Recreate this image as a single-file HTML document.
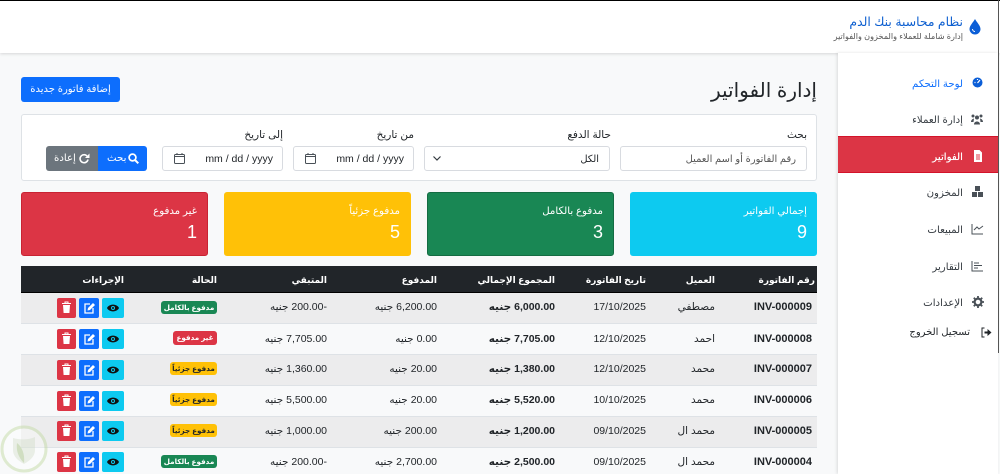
<!DOCTYPE html>
<html lang="ar" dir="rtl">
<head>
<meta charset="utf-8">
<style>
*{box-sizing:border-box;margin:0;padding:0}
html,body{width:1000px;height:474px;overflow:hidden}
body{position:relative;background:#f8f9fa;font-family:"Liberation Sans","DejaVu Sans",sans-serif;color:#212529;font-size:11px}
.a{position:absolute;white-space:nowrap}
.r{position:absolute;white-space:nowrap;text-align:right;direction:rtl}
#top{left:0;top:0;width:1000px;height:53px;background:#fff;border-top:1px solid #000;box-shadow:0 1px 3px rgba(0,0,0,.14)}
#side{left:838px;top:53px;width:160px;height:421px;background:#fff;box-shadow:-1px 0 3px rgba(0,0,0,.12)}
#edge{left:998px;top:0;width:1px;height:353px;background:#555}
#act{left:838px;top:136px;width:160px;height:37px;background:#dc3545;border-top:1px solid #d3132a;border-bottom:1px solid #d3132a}
.nav{font-size:10.2px;color:#343a40;line-height:14px}
.ic{position:absolute}
#filter{left:21px;top:114px;width:796px;height:67px;background:#fff;border:1px solid #dee2e6;border-radius:3px}
.lab{font-size:10.5px;color:#212529;line-height:14px}
.inp{position:absolute;height:25px;background:#fff;border:1px solid #d8dbe0;border-radius:3px;top:146px;font-size:9.9px;line-height:25px}
.date{font-size:10.5px;direction:ltr;text-align:right;padding-right:9px}
.card{position:absolute;top:192px;height:64px;width:187px;border-radius:3px;color:#fff}
.card .t{position:absolute;right:11px;top:13px;font-size:10.2px;line-height:14px;white-space:nowrap}
.card .n{position:absolute;right:11px;top:29px;font-size:18px;line-height:22px}
.hd{left:21px;top:266px;width:796px;height:27px;background:#212529;border-bottom:1px solid #000}
.th{position:absolute;top:273px;color:#fff;font-weight:bold;font-size:9px;line-height:14px;white-space:nowrap;text-align:right;direction:rtl}
.row{position:absolute;left:21px;width:796px;height:31px;border-bottom:1px solid #dee2e6}
.td{position:absolute;font-size:10.5px;line-height:14px;white-space:nowrap;text-align:right;color:#212529}
.inv{font-size:11px;font-weight:bold;direction:ltr}
.bg{position:absolute;height:13px;border-radius:3px;font-size:7.2px;font-weight:bold;line-height:13px;text-align:center;white-space:nowrap}
.gbtn{position:absolute;top:146px;height:25px;color:#fff;font-size:10.2px;line-height:25px;text-align:left}
</style>
</head>
<body>
<div class="a" id="top"></div>
<div class="a" id="side"></div>
<div class="a" id="act"></div>
<div class="a" id="edge"></div>

<svg class="ic" style="left:968px;top:18px" width="14" height="17" viewBox="0 0 14 17"><path d="M7 1C5.500 4 1.500 7.500 1.500 11a5.500 5.500 0 0 0 11 0C12.500 7.500 8.500 4 7 1z" fill="#0b5ed7"/><path d="M4.500 11a2.500 2.500 0 0 0 2.500 2.500" stroke="#fff" fill="none"/></svg>
<div class="r" style="right:37px;top:13px;font-size:12.4px;line-height:18px;color:#0d5fd0">نظام محاسبة بنك الدم</div>
<div class="r" style="right:37px;top:31px;font-size:8.1px;line-height:12px;color:#555">إدارة شاملة للعملاء والمخزون والفواتير</div>

<svg class="ic" style="left:972px;top:77px" width="11" height="11" viewBox="0 0 11 11"><circle cx="5.500" cy="5.500" r="5" fill="#0b5ed7"/><path d="M5.500 6L8 3M2.500 5.500h1M5.500 2v1" stroke="#fff" stroke-width="1.200"/></svg>
<div class="r nav" style="right:37px;top:78px;color:#0d6efd">لوحة التحكم</div>
<svg class="ic" style="left:970px;top:113px" width="14" height="12" viewBox="0 0 14 12"><g fill="#495057"><circle cx="3" cy="3" r="1.500"/><circle cx="11" cy="3" r="1.500"/><circle cx="7" cy="4.500" r="2"/><path d="M1 9c0-3 3-3.500 3-3.500L3.500 9zM13 9c0-3-3-3.500-3-3.500L10.500 9zM4 11.500c0-4 6-4 6 0z"/></g></svg>
<div class="r nav" style="right:37px;top:114px">إدارة العملاء</div>
<svg class="ic" style="left:973px;top:150px" width="10" height="12" viewBox="0 0 10 12"><path d="M1 0h5.500L9 2.500V12H1z" fill="#fff"/><path d="M3 5h4M3 7h4M3 9h4" stroke="#dc3545"/></svg>
<div class="r nav" style="right:37px;top:151px;color:#fff;text-shadow:0 0 .4px #fff">الفواتير</div>
<svg class="ic" style="left:971px;top:186px" width="13" height="12" viewBox="0 0 13 12"><g fill="#495057"><rect x="1" y="6" width="5" height="5"/><rect x="7" y="6" width="5" height="5"/><rect x="4" y="0" width="5" height="5"/></g></svg>
<div class="r nav" style="right:37px;top:187px">المخزون</div>
<svg class="ic" style="left:971px;top:223px" width="13" height="12" viewBox="0 0 13 12"><path d="M1 1v10h11" stroke="#495057" fill="none" stroke-width="1"/><path d="M3 7l3-3 2 2 4-3" stroke="#495057" fill="none" stroke-width="1"/></svg>
<div class="r nav" style="right:37px;top:224px">المبيعات</div>
<svg class="ic" style="left:971px;top:260px" width="13" height="12" viewBox="0 0 13 12"><path d="M1 1v10h11" stroke="#495057" fill="none"/><path d="M3 3h5M3 5.500h8M3 8h4" stroke="#495057"/></svg>
<div class="r nav" style="right:37px;top:261px">التقارير</div>
<svg class="ic" style="left:972px;top:296px" width="12" height="12" viewBox="0 0 12 12"><circle cx="6" cy="6" r="3.400" fill="none" stroke="#495057" stroke-width="2.200"/><path d="M6 0v2M6 10v2M0 6h2M10 6h2M1.800 1.800l1.400 1.400M8.800 8.800l1.400 1.400M1.800 10.200l1.400-1.400M8.800 3.200l1.400-1.400" stroke="#495057" stroke-width="1.800"/></svg>
<div class="r nav" style="right:37px;top:297px">الإعدادات</div>
<svg class="ic" style="left:981px;top:327px" width="11" height="11" viewBox="0 0 11 11"><path d="M3.500 1H1v9h2.500" stroke="#212529" fill="none"/><path d="M3.500 4.500h3V2l4 3.500-4 3.500V6.500h-3z" fill="#212529"/></svg>
<div class="r" style="right:30px;top:326px;font-size:10px;line-height:14px;color:#212529">تسجيل الخروج</div>

<div class="r" style="right:183px;top:76px;font-size:20px;line-height:30px;color:#212529">إدارة الفواتير</div>
<div class="a" style="left:21px;top:77px;width:99px;height:25px;background:#0d6efd;border-radius:3px;color:#fff;font-size:10px;line-height:25px;text-align:center;direction:rtl">إضافة فاتورة جديدة</div>

<div class="a" id="filter"></div>
<div class="r lab" style="right:193px;top:128px">بحث</div>
<div class="r lab" style="right:389px;top:128px">حالة الدفع</div>
<div class="r lab" style="right:586px;top:128px">من تاريخ</div>
<div class="r lab" style="right:717px;top:128px">إلى تاريخ</div>

<div class="inp" style="left:620px;width:187px;text-align:right;padding-right:10px;color:#555">رقم الفاتورة أو اسم العميل</div>
<div class="inp" style="left:424px;width:186px;text-align:right;padding-right:10px">الكل</div>
<svg class="ic" style="left:432px;top:155px" width="10" height="7" viewBox="0 0 10 7"><path d="M1.500 1.500L5 5l3.500-3.500" stroke="#343a40" fill="none" stroke-width="1.200"/></svg>
<div class="inp date" style="left:293px;width:121px">mm / dd / yyyy</div>
<svg class="ic" style="left:305px;top:153px" width="11" height="11" viewBox="0 0 11 11"><rect x=".5" y="1.500" width="10" height="9" rx="1" fill="none" stroke="#495057"/><path d="M.5 3.500h10M3 0v2M8 0v2" stroke="#495057"/></svg>
<div class="inp date" style="left:162px;width:121px">mm / dd / yyyy</div>
<svg class="ic" style="left:174px;top:153px" width="11" height="11" viewBox="0 0 11 11"><rect x=".5" y="1.500" width="10" height="9" rx="1" fill="none" stroke="#495057"/><path d="M.5 3.500h10M3 0v2M8 0v2" stroke="#495057"/></svg>

<div class="gbtn" style="left:46px;width:53px;background:#6c757d;border-radius:3px 0 0 3px;padding-left:8px">إعادة</div>
<svg class="ic" style="left:79px;top:153px" width="11" height="11" viewBox="0 0 11 11"><path d="M9 6.500A4 4 0 1 1 8 3" stroke="#fff" fill="none" stroke-width="1.600"/><path d="M10.500 .5v4.500H6z" fill="#fff"/></svg>
<div class="gbtn" style="left:98px;width:49px;background:#0d6efd;border-radius:0 3px 3px 0;padding-left:9px">بحث</div>
<svg class="ic" style="left:128px;top:153px" width="11" height="11" viewBox="0 0 11 11"><circle cx="4.500" cy="4.500" r="3.400" fill="none" stroke="#fff" stroke-width="1.700"/><path d="M7 7l3.300 3.300" stroke="#fff" stroke-width="2"/></svg>

<div class="card" style="left:630px;background:#0dcaf0"><div class="t" style="right:10px">إجمالي الفواتير</div><div class="n" style="right:10px">9</div></div>
<div class="card" style="left:427px;background:#198754;border:1px solid #146c43"><div class="t" style="right:10px;top:12px">مدفوع بالكامل</div><div class="n" style="right:10px;top:28px">3</div></div>
<div class="card" style="left:224px;background:#ffc107"><div class="t">مدفوع جزئياً</div><div class="n">5</div></div>
<div class="card" style="left:21px;background:#dc3545;border:1px solid #c82333"><div class="t" style="right:10px;top:12px">غير مدفوع</div><div class="n" style="right:10px;top:28px">1</div></div>

<div class="a hd"></div>
<div class="th" style="right:185px">رقم الفاتورة</div>
<div class="th" style="right:285px">العميل</div>
<div class="th" style="right:354px">تاريخ الفاتورة</div>
<div class="th" style="right:445px">المجموع الإجمالي</div>
<div class="th" style="right:563px">المدفوع</div>
<div class="th" style="right:673px">المتبقي</div>
<div class="th" style="right:783px">الحالة</div>
<div class="th" style="right:876px">الإجراءات</div>

<div class="row" style="top:293px;background:#ececed"></div>
<div class="row" style="top:324px;background:#f8f9fa"></div>
<div class="row" style="top:355px;background:#ececed"></div>
<div class="row" style="top:386px;background:#f8f9fa"></div>
<div class="row" style="top:417px;background:#ececed"></div>
<div class="row" style="top:448px;background:#f8f9fa"></div>

<!-- Row 1 -->
<div class="td inv" style="right:188px;top:300px">INV-000009</div>
<div class="td" style="right:285px;top:300px">مصطفي</div>
<div class="td" style="right:354px;top:300px;direction:ltr">17/10/2025</div>
<div class="td" style="right:445px;top:300px;font-weight:bold">6,000.00 جنيه</div>
<div class="td" style="right:563px;top:300px">6,200.00 جنيه</div>
<div class="td" style="right:673px;top:300px">-200.00 جنيه</div>
<div class="bg" style="left:161px;top:301px;width:56px;background:#198754;color:#fff">مدفوع بالكامل</div>

<!-- Row 2 -->
<div class="td inv" style="right:188px;top:332px">INV-000008</div>
<div class="td" style="right:285px;top:332px">احمد</div>
<div class="td" style="right:354px;top:332px;direction:ltr">12/10/2025</div>
<div class="td" style="right:445px;top:332px;font-weight:bold">7,705.00 جنيه</div>
<div class="td" style="right:563px;top:332px">0.00 جنيه</div>
<div class="td" style="right:673px;top:332px">7,705.00 جنيه</div>
<div class="bg" style="left:173px;top:331px;width:44px;height:14px;background:#dc3545;color:#fff">غير مدفوع</div>

<!-- Row 3 -->
<div class="td inv" style="right:188px;top:362px">INV-000007</div>
<div class="td" style="right:285px;top:362px">محمد</div>
<div class="td" style="right:354px;top:362px;direction:ltr">12/10/2025</div>
<div class="td" style="right:445px;top:362px;font-weight:bold">1,380.00 جنيه</div>
<div class="td" style="right:563px;top:362px">20.00 جنيه</div>
<div class="td" style="right:673px;top:362px">1,360.00 جنيه</div>
<div class="bg" style="left:170px;top:362px;width:47px;background:#ffc107;color:#212529">مدفوع جزئياً</div>

<!-- Row 4 -->
<div class="td inv" style="right:188px;top:393px">INV-000006</div>
<div class="td" style="right:285px;top:393px">محمد</div>
<div class="td" style="right:354px;top:393px;direction:ltr">10/10/2025</div>
<div class="td" style="right:445px;top:393px;font-weight:bold">5,520.00 جنيه</div>
<div class="td" style="right:563px;top:393px">20.00 جنيه</div>
<div class="td" style="right:673px;top:393px">5,500.00 جنيه</div>
<div class="bg" style="left:170px;top:393px;width:47px;background:#ffc107;color:#212529">مدفوع جزئياً</div>

<!-- Row 5 -->
<div class="td inv" style="right:188px;top:424px">INV-000005</div>
<div class="td" style="right:285px;top:424px">محمد ال</div>
<div class="td" style="right:354px;top:424px;direction:ltr">09/10/2025</div>
<div class="td" style="right:445px;top:424px;font-weight:bold">1,200.00 جنيه</div>
<div class="td" style="right:563px;top:424px">200.00 جنيه</div>
<div class="td" style="right:673px;top:424px">1,000.00 جنيه</div>
<div class="bg" style="left:170px;top:424px;width:47px;background:#ffc107;color:#212529">مدفوع جزئياً</div>

<!-- Row 6 -->
<div class="td inv" style="right:188px;top:455px">INV-000004</div>
<div class="td" style="right:285px;top:455px">محمد ال</div>
<div class="td" style="right:354px;top:455px;direction:ltr">09/10/2025</div>
<div class="td" style="right:445px;top:455px;font-weight:bold">2,500.00 جنيه</div>
<div class="td" style="right:563px;top:455px">2,700.00 جنيه</div>
<div class="td" style="right:673px;top:455px">-200.00 جنيه</div>
<div class="bg" style="left:161px;top:455px;width:56px;background:#198754;color:#fff">مدفوع بالكامل</div>

<!-- Action buttons -->
<svg class="ic" style="left:0;top:0" width="1000" height="474" viewBox="0 0 1000 474">
<defs>
<g id="acts">
<rect x="57" y="0" width="19" height="20" rx="2" fill="#dc3545"/>
<path d="M62 5.500h9M65 5.500V4h3v1.500" stroke="#fff" fill="none"/>
<path d="M63 7h7l-.6 8h-5.800z" fill="#fff"/>
<rect x="79" y="0" width="20" height="20" rx="2" fill="#0d6efd"/>
<path d="M90 6h-5v9h8v-5" stroke="#fff" fill="none" stroke-width="1.300"/>
<path d="M87.500 12.500l.5-2.500 5-5 2 2-5 5z" fill="#fff"/>
<rect x="102" y="0" width="22" height="20" rx="2" fill="#0dcaf0"/>
<path d="M107 10c2-4.500 10-4.500 12 0-2 4.500-10 4.500-12 0z" fill="#111"/>
<circle cx="113" cy="10" r="2" fill="#0dcaf0"/>
<circle cx="113" cy="10" r="1" fill="#111"/>
</g>
</defs>
<use href="#acts" y="298"/>
<use href="#acts" y="329"/>
<use href="#acts" y="360"/>
<use href="#acts" y="391"/>
<use href="#acts" y="421"/>
<use href="#acts" y="452"/>
<g opacity=".5">
<circle cx="24" cy="449" r="22" fill="#fff" fill-opacity=".55" stroke="#c5dca8" stroke-width="3"/>
<path d="M13 438c7 2 15 2 22-1v13c0 7-6 11-11 14-5-3-11-7-11-14z" fill="#dbe5d3"/>
<path d="M24 463c-6-6-8-13-7-20 5 4 8 11 7 20z" fill="#a9c48a"/>
</g>
</svg>
</body>
</html>
